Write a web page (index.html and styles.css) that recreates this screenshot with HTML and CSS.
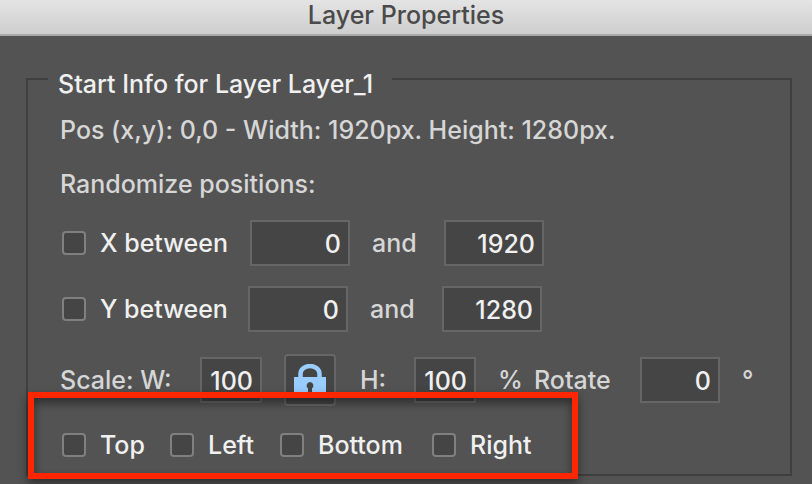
FILE: index.html
```html
<!DOCTYPE html>
<html lang="en">
<head>
<meta charset="utf-8">
<title>Layer Properties</title>
<link rel="stylesheet" href="styles.css">
</head>
<body>
<header class="titlebar"><h1>Layer Properties</h1></header>
<main class="dialog">
  <fieldset class="group">
    <legend>Start Info for Layer Layer_1</legend>
    <p class="info">Pos (x,y): 0,0 - Width: 1920px. Height: 1280px.</p>
    <p class="heading">Randomize positions:</p>
    <div class="row range">
      <label class="check"><input type="checkbox">X between</label>
      <input class="field" type="text" value="0" aria-label="X minimum">
      <label class="and" for="x-max">and</label>
      <input class="field" type="text" value="1920" id="x-max">
    </div>
    <div class="row range range-y">
      <label class="check"><input type="checkbox">Y between</label>
      <input class="field" type="text" value="0" aria-label="Y minimum">
      <label class="and" for="y-max">and</label>
      <input class="field" type="text" value="1280" id="y-max">
    </div>
    <div class="row scale">
      <label for="scale-w">Scale: W:</label>
      <input class="field" type="text" value="100" id="scale-w">
      <button class="lock" type="button" aria-label="Lock proportions">
        <svg width="32" height="32" viewBox="0 0 32 32" aria-hidden="true">
          <path d="M6.500 14V10A9.500 8 0 0 1 25.500 10V14" fill="none" stroke="#99ccff" stroke-width="4.500"/>
          <path fill="#99ccff" fill-rule="evenodd" d="M0 13H32V32H0ZM16 18A3.500 3.500 0 0 0 14 24.300V28H18V24.300A3.500 3.500 0 0 0 16 18Z"/>
        </svg>
      </button>
      <label for="scale-h">H:</label>
      <input class="field" type="text" value="100" id="scale-h">
      <span class="unit">%</span>
      <label for="rotate">Rotate</label>
      <input class="field" type="text" value="0" id="rotate">
      <span class="unit">°</span>
    </div>
    <div class="row sides">
      <label class="check"><input type="checkbox">Top</label>
      <label class="check"><input type="checkbox">Left</label>
      <label class="check"><input type="checkbox">Bottom</label>
      <label class="check"><input type="checkbox">Right</label>
      <span class="highlight"></span>
    </div>
  </fieldset>
</main>
</body>
</html>
```
FILE: styles.css
```css
* {
  box-sizing: border-box;
}

body {
  margin: 0;
  background: #535353;
  color: #d6d6d6;
  font: 500 25px/30px Inter, "Liberation Sans", sans-serif;
  overflow: hidden;
}

.titlebar {
  height: 36px;
  background: linear-gradient(#e4e4e4, #cecece);
  border-bottom: 2px solid #aaa;
  text-align: center;
}

.titlebar h1 {
  margin: 0;
  font-size: 25px;
  font-weight: 500;
  color: #4a4a4a;
}

.dialog {
  padding: 23px 20px 8px 26px;
}

.group {
  margin: 0;
  padding: 16px 12px 14px 32px;
  border: 2px solid #3f3f3f;
  min-width: 0;
}

legend {
  margin-left: -12px;
  padding: 10px 19px 0 10px;
  color: #f0f0f0;
}

.info,
.heading {
  margin: 0;
}

.heading {
  margin: 24px 0 21px;
}

.row {
  display: grid;
  align-items: center;
  white-space: nowrap;
}

.range {
  grid-template-columns: 190px 100px 94px 100px;
}

.range-y {
  grid-template-columns: 188px 100px 94px 100px;
  margin: 20px 0 22px;
}

.and {
  padding-left: 22px;
}

.scale {
  grid-template-columns: 140px 62px 98px 54px 62px 58px 106px 80px auto;
}

.unit {
  padding-left: 22px;
}

.sides {
  position: relative;
  grid-template-columns: 108px 110px 152px auto;
  margin-top: 24px;
}

.check {
  display: flex;
  align-items: center;
  gap: 14px;
  padding-left: 2px;
  color: #f0f0f0;
}

.check input {
  appearance: none;
  width: 24px;
  height: 24px;
  margin: 0;
  border: 2px solid #808080;
  border-radius: 4px;
  background: #454545;
}

.field {
  width: 100%;
  height: 46px;
  padding: 2px 7px 0;
  border: 2px solid #666;
  border-radius: 0;
  background: #454545;
  color: #f0f0f0;
  font: inherit;
  text-align: right;
}

.lock {
  display: grid;
  place-items: center;
  width: 52px;
  height: 52px;
  margin: 0 0 0 22px;
  padding: 0;
  border: 2px solid #666;
  border-radius: 4px;
  background: #454545;
}

.highlight {
  position: absolute;
  inset: -38px auto -19px -32px;
  width: 550px;
  border: 6px solid #ff2600;
  box-shadow: 0 5px 10px rgb(0 0 0 / 45%), inset 0 5px 10px rgb(0 0 0 / 45%);
  pointer-events: none;
}
```
